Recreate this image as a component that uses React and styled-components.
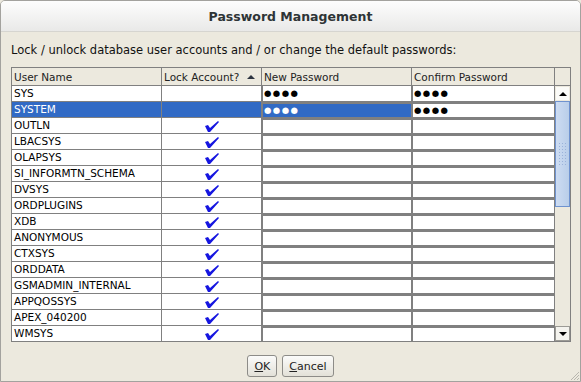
import styled, { createGlobalStyle } from "styled-components";

const GlobalStyle = createGlobalStyle`
  html, body {
    margin: 0;
    padding: 0;
  }
  body {
    font-family: "DejaVu Sans", "Liberation Sans", sans-serif;
    background: #ece9de;
  }
`;

const LINE = "#808080";

const Window = styled.div`
  position: relative;
  width: 581px;
  height: 382px;
  box-sizing: border-box;
  display: flex;
  flex-direction: column;
  background: #ece9de;
  border: 1px solid #a3a29e;
  border-radius: 5px 5px 0 0;
  overflow: hidden;
`;

const TitleBar = styled.div`
  height: 31px;
  box-sizing: border-box;
  display: flex;
  align-items: center;
  justify-content: center;
  background: linear-gradient(#fdfdfd, #e9e9e8);
  border-bottom: 1px solid #d6d5d0;
  color: #2e3436;
  font-size: 12.5px;
  font-weight: bold;
`;

const Body = styled.div`
  display: flex;
  flex-direction: column;
  padding: 0 9px 0 10px;
`;

const Intro = styled.div`
  margin-top: 10px;
  height: 16px;
  line-height: 16px;
  font-size: 11.5px;
  color: #111;
  white-space: nowrap;
`;

const Table = styled.div`
  margin-top: 9px;
  width: 560px;
  box-sizing: border-box;
  border: 1px solid ${LINE};
  font-size: 10.5px;
`;

const Header = styled.div`
  display: grid;
  grid-template-columns: 150px 100px 150px 143px 15px;
  height: 18px;
`;

const HeadCell = styled.div`
  box-sizing: border-box;
  display: flex;
  align-items: center;
  justify-content: space-between;
  padding: 0 6px 0 2px;
  color: #222;
  border-bottom: 1px solid ${LINE};
  border-right: ${(p) => (p.$last ? "none" : `1px solid ${LINE}`)};
`;

const SortArrow = styled.span`
  width: 0;
  height: 0;
  border-left: 4px solid transparent;
  border-right: 4px solid transparent;
  border-bottom: 4px solid #2c3440;
`;

const Content = styled.div`
  display: flex;
`;

const Rows = styled.div`
  width: 543px;
  background: #fff;
`;

const Row = styled.div`
  display: grid;
  grid-template-columns: 150px 100px 150px 143px;
  height: ${(p) => (p.$last ? "15px" : "16px")};
  box-sizing: border-box;
  border-bottom: ${(p) => (p.$last ? "none" : `1px solid ${LINE}`)};
`;

const NameCell = styled.div`
  box-sizing: border-box;
  padding-left: 2px;
  line-height: 15px;
  border-right: 1px solid ${LINE};
  background: ${(p) => (p.$selected ? "#316ac5" : "#fff")};
  color: ${(p) => (p.$selected ? "#fff" : "#000")};
  white-space: nowrap;
  overflow: hidden;
`;

const LockCell = styled.div`
  box-sizing: border-box;
  display: flex;
  align-items: center;
  justify-content: center;
  padding-top: 1px;
  border-right: 1px solid ${LINE};
  background: ${(p) => (p.$selected ? "#316ac5" : "#fff")};
`;

const PwCell = styled.div`
  box-sizing: border-box;
  display: flex;
  align-items: center;
  padding-left: 1px;
  border-top: ${(p) => (p.$first ? "none" : `2px solid ${LINE}`)};
  border-left: 1px solid ${LINE};
  border-right: 1px solid ${LINE};
  background: ${(p) => (p.$selected ? "#316ac5" : "#fff")};
  color: ${(p) => (p.$selected ? "#fff" : "#000")};
`;

const Dots = styled.span`
  font-family: "DejaVu Sans", sans-serif;
  font-size: 8.5px;
  letter-spacing: 1.4px;
  line-height: 1;
`;

const Scrollbar = styled.div`
  width: 15px;
  display: flex;
  flex-direction: column;
  background: #ece9de;
`;

const ArrowButton = styled.div`
  height: 15px;
  box-sizing: border-box;
  display: flex;
  align-items: center;
  justify-content: center;
  background: ${(p) => (p.$down ? "#f4f3ee" : "#fbfbf8")};
  border: 1px solid ${(p) => (p.$down ? "#9c9b96" : "#ece9de")};
`;

const Arrow = styled.span`
  width: 0;
  height: 0;
  border-left: 4px solid transparent;
  border-right: 4px solid transparent;
  ${(p) =>
    p.$down ? "border-top: 4px solid #000;" : "border-bottom: 4px solid #000;"}
`;

const Thumb = styled.div`
  height: 106px;
  box-sizing: border-box;
  display: flex;
  align-items: center;
  justify-content: center;
  background: linear-gradient(90deg, #cddcf2, #b9cee9);
  border: 1px solid #6f93cf;
`;

const Grip = styled.div`
  width: 9px;
  height: 24px;
  background-image: radial-gradient(circle, #9ab2da 0.6px, transparent 0.9px);
  background-size: 3px 3px;
`;

const Track = styled.div`
  flex: 1;
`;

const Footer = styled.div`
  flex: 1;
  display: flex;
  justify-content: center;
  align-items: flex-start;
  gap: 5px;
  padding-top: 13px;
`;

const Button = styled.button`
  height: 22px;
  min-width: ${(p) => p.$w}px;
  box-sizing: border-box;
  padding: 0 6px;
  font-family: "DejaVu Sans", sans-serif;
  font-size: 11px;
  color: #222;
  background: linear-gradient(#fbfbfa, #e3e1d8);
  border: 1px solid #8d8c88;
  border-radius: 3px;

  u {
    text-decoration: underline;
  }
`;

const ResizeGrip = styled.svg`
  position: absolute;
  right: 0;
  bottom: 0;
`;

const Check = () => (
  <svg width="16" height="11" viewBox="0 0 16 11">
    <polygon points="1,5 4,4 6,7 14,0 15,1 6,11 4,11" fill="#1616e0" />
  </svg>
);

const users = [
  { name: "SYS", pw: true },
  { name: "SYSTEM", pw: true, selected: true },
  { name: "OUTLN", lock: true },
  { name: "LBACSYS", lock: true },
  { name: "OLAPSYS", lock: true },
  { name: "SI_INFORMTN_SCHEMA", lock: true },
  { name: "DVSYS", lock: true },
  { name: "ORDPLUGINS", lock: true },
  { name: "XDB", lock: true },
  { name: "ANONYMOUS", lock: true },
  { name: "CTXSYS", lock: true },
  { name: "ORDDATA", lock: true },
  { name: "GSMADMIN_INTERNAL", lock: true },
  { name: "APPQOSSYS", lock: true },
  { name: "APEX_040200", lock: true },
  { name: "WMSYS", lock: true },
];

const App = () => {
  return (
    <>
      <GlobalStyle />
      <Window>
        <TitleBar>Password Management</TitleBar>
        <Body>
          <Intro>
            Lock / unlock database user accounts and / or change the default
            passwords:
          </Intro>
          <Table>
            <Header>
              <HeadCell>User Name</HeadCell>
              <HeadCell>
                Lock Account?
                <SortArrow />
              </HeadCell>
              <HeadCell>New Password</HeadCell>
              <HeadCell>Confirm Password</HeadCell>
              <HeadCell $last />
            </Header>
            <Content>
              <Rows>
                {users.map((u, i) => (
                  <Row key={u.name} $last={i === users.length - 1}>
                    <NameCell $selected={u.selected}>{u.name}</NameCell>
                    <LockCell $selected={u.selected}>
                      {u.lock && <Check />}
                    </LockCell>
                    <PwCell $first={i === 0} $selected={u.selected}>
                      {u.pw && <Dots>●●●●</Dots>}
                    </PwCell>
                    <PwCell $first={i === 0}>
                      {u.pw && <Dots>●●●●</Dots>}
                    </PwCell>
                  </Row>
                ))}
              </Rows>
              <Scrollbar>
                <ArrowButton>
                  <Arrow />
                </ArrowButton>
                <Thumb>
                  <Grip />
                </Thumb>
                <Track />
                <ArrowButton $down>
                  <Arrow $down />
                </ArrowButton>
              </Scrollbar>
            </Content>
          </Table>
        </Body>
        <Footer>
          <Button $w={30}>
            <u>O</u>K
          </Button>
          <Button $w={50}>
            <u>C</u>ancel
          </Button>
        </Footer>
        <ResizeGrip width="11" height="11" viewBox="0 0 11 11">
          <path d="M10 2 L2 10 M10 5 L5 10 M10 8 L8 10" stroke="#b8b6ae" strokeWidth="1" />
        </ResizeGrip>
      </Window>
    </>
  );
};

export default App;
